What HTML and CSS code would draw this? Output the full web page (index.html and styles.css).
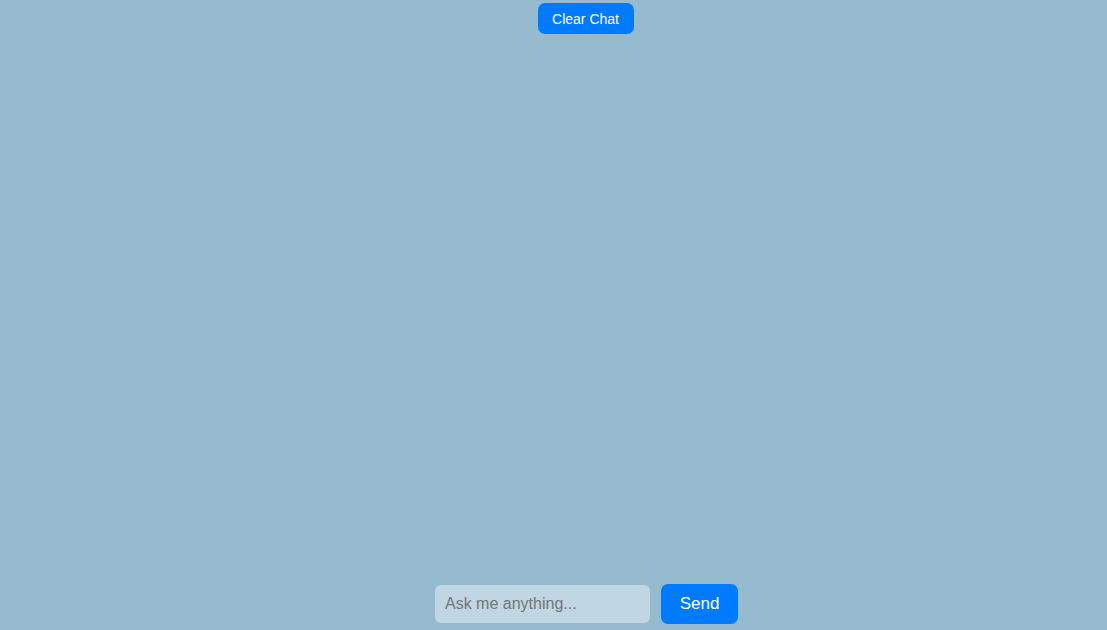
FILE: index.html
```html
<!DOCTYPE html>
<html lang="en">
<head>
<meta charset="utf-8">
<title>Chat</title>
<link rel="stylesheet" href="styles.css">
</head>
<body>
<div class="app">
  <div class="top-bar">
    <button class="clear-btn">Clear Chat</button>
  </div>
  <div class="chat-area"></div>
  <form class="input-row" onsubmit="return false;">
    <input class="chat-input" type="text" placeholder="Ask me anything...">
    <button class="send-btn">Send</button>
  </form>
</div>
</body>
</html>
```
FILE: styles.css
```css
* { box-sizing: border-box; }
html, body {
  margin: 0;
  height: 100%;
}
body {
  background: #96bbcf;
  font-family: "Liberation Sans", Arial, sans-serif;
  overflow: hidden;
}
.app {
  height: 100%;
  display: flex;
  flex-direction: column;
  align-items: center;
  padding: 3px 0 6px 66px;
}
.top-bar {
  display: flex;
  justify-content: center;
  padding-right: 2px;
}
.clear-btn {
  width: 96px;
  height: 31px;
  border: none;
  border-radius: 7px;
  background: #007bff;
  color: #fff;
  font-family: "Liberation Sans", Arial, sans-serif;
  font-size: 14px;
  padding: 0;
}
.chat-area {
  flex: 1;
}
.input-row {
  display: flex;
  align-items: center;
  gap: 11px;
  margin: 0;
}
.chat-input {
  width: 215px;
  height: 38px;
  border: none;
  border-radius: 6px;
  background: rgba(255, 255, 255, 0.4);
  padding: 0 10px;
  font-family: "Liberation Sans", Arial, sans-serif;
  font-size: 16px;
  color: #333;
  outline: none;
}
.chat-input::placeholder {
  color: #757575;
}
.send-btn {
  width: 77px;
  height: 40px;
  border: none;
  border-radius: 7px;
  background: #007bff;
  color: #fff;
  font-family: "Liberation Sans", Arial, sans-serif;
  font-size: 17px;
  padding: 0;
}
```
